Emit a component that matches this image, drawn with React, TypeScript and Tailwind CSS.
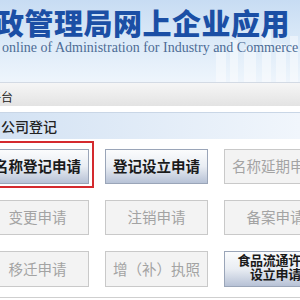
const cjk = "font-['Noto_Sans_CJK_SC','Noto_Sans',sans-serif]";

interface Btn {
  label: string[];
  active?: boolean;
}

const rows: Btn[][] = [
  [
    { label: ["名称登记申请"], active: true },
    { label: ["登记设立申请"], active: true },
    { label: ["名称延期申请"] },
  ],
  [{ label: ["变更申请"] }, { label: ["注销申请"] }, { label: ["备案申请"] }],
  [
    { label: ["移迁申请"] },
    { label: ["增（补）执照"] },
    { label: ["食品流通许可", "设立申请"], active: true },
  ],
];

function Skyline() {
  return (
    <svg
      className="absolute right-0 bottom-0"
      width="90"
      height="60"
      viewBox="0 0 90 60"
    >
      <g fill="#ffffff" opacity="0.45">
        <rect x="6" y="30" width="10" height="30" />
        <rect x="20" y="18" width="8" height="42" />
        <rect x="34" y="26" width="12" height="34" />
        <rect x="52" y="8" width="9" height="52" />
        <rect x="66" y="22" width="10" height="38" />
        <rect x="80" y="14" width="8" height="46" />
      </g>
    </svg>
  );
}

function Button({ btn }: { btn: Btn }) {
  const multi = btn.label.length > 1;
  return (
    <div
      className={
        "flex flex-col items-center justify-center whitespace-nowrap border " +
        (btn.active
          ? "border-[#9aa5b8] bg-gradient-to-b from-[#fbfcfd] via-[#e9edf3] to-[#b7c2d6] font-bold text-[#1a1a1a]"
          : "border-[#c9c9c9] bg-[#f3f3f3] text-[#a3a3a3]") +
        (multi ? " pb-1 text-[13px] leading-[14px] tracking-[-0.3px]" : " text-[14.5px] leading-none")
      }
    >
      {btn.label.map((l) => (
        <span key={l}>{l}</span>
      ))}
    </div>
  );
}

export default function App() {
  return (
    <div className={`relative h-[300px] w-[300px] overflow-hidden bg-white ${cjk}`}>
      {/* banner */}
      <div className="relative h-[82px] bg-gradient-to-b from-[#c7dcf3] via-[#dceaf8] to-[#eef5fc]">
        <Skyline />
        <div className="relative ml-[-5px] pt-[4px] whitespace-nowrap text-[29px] font-black leading-[36px] tracking-[0.5px] text-[#1b4fa5]">
          政管理局网上企业应用
        </div>
        <div className="relative ml-[2px] whitespace-nowrap font-['Liberation_Serif',serif] text-[14px] leading-[16px] text-[#4d6c96]">
          online of Administration for Industry and Commerce
        </div>
      </div>

      {/* nav bar */}
      <div className="h-[24px] border-t border-[#d3dae4] bg-gradient-to-b from-[#f6f6f6] to-[#e3e3e3]">
        <span className="ml-[-11px] text-[12px] leading-[21px] text-[#222]">平台</span>
      </div>

      {/* section header */}
      <div className="mt-[6px] h-[27px] border-t border-[#c9d6e6] bg-gradient-to-r from-[#d3e2f3] to-[#f1f6fc] pl-[1px] text-[14px] font-medium leading-[26px] text-[#222]">
        公司登记
      </div>

      {/* buttons */}
      <div className="ml-[-14px] mt-[10px] grid grid-cols-[103px_103px_103px] gap-x-[16px] gap-y-[16px]">
        {rows.map((row, i) =>
          row.map((b) => (
            <div key={b.label.join("")} className={i === 2 ? "h-[36px] grid" : "h-[35px] grid"}>
              <Button btn={b} />
            </div>
          ))
        )}
      </div>

      <div className="mt-[10px] border-t border-[#cfcfcf]" />

      {/* highlight */}
      <div className="absolute left-[-20px] top-[141px] h-[47px] w-[114px] border-2 border-[#d42a2e]" />
    </div>
  );
}
